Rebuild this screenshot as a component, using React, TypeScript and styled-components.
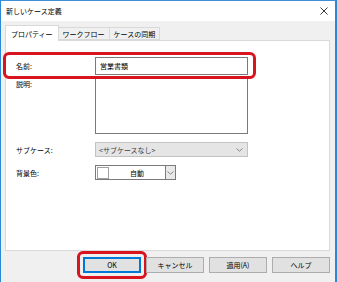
import { createGlobalStyle, styled } from 'styled-components';

const GlobalStyle = createGlobalStyle`
  html, body { margin: 0; padding: 0; background: #fff; }
  body { font-family: "Noto Sans CJK JP", "Noto Sans", sans-serif; font-size: 7px; color: #000; }
`;

const Window = styled.div`
  width: 337px;
  height: 282px;
  box-sizing: border-box;
  border-top: 1px solid #3c8fd8;
  border-left: 1px solid #2b88d8;
  border-right: 2px solid #2b88d8;
  background: #f0f0f0;
  display: flex;
  flex-direction: column;
  overflow: hidden;
`;

const TitleBar = styled.div`
  height: 20px;
  background: #fff;
  display: flex;
  align-items: center;
  justify-content: space-between;
  padding: 0 7px 0 5px;
`;

const Body = styled.div`
  flex: 1;
  display: flex;
  flex-direction: column;
  padding: 4px 5px 0 4px;
`;

const TabStrip = styled.div`
  display: flex;
  align-items: flex-end;
  height: 15px;
`;

const Tab = styled.div<{ active?: boolean }>`
  box-sizing: border-box;
  height: ${({ active }) => (active ? '16px' : '13px')};
  margin-bottom: ${({ active }) => (active ? '-1px' : '0')};
  padding: 0 ${({ active }) => (active ? '5px' : '4px')};
  display: flex;
  align-items: center;
  background: ${({ active }) => (active ? '#fff' : '#f0f0f0')};
  border: 1px solid #d9d9d9;
  border-bottom: ${({ active }) => (active ? 'none' : '1px solid #d9d9d9')};
  margin-left: ${({ active }) => (active ? '0' : '-1px')};
  position: relative;
  z-index: ${({ active }) => (active ? 1 : 0)};
  white-space: nowrap;
`;

const Panel = styled.div`
  box-sizing: border-box;
  height: 211px;
  background: #fff;
  border: 1px solid #d9d9d9;
  padding: 16px 0 0 10px;
  display: grid;
  grid-template-columns: 79px 153px;
  grid-auto-rows: min-content;
`;

const Label = styled.div<{ top?: boolean; gap?: number }>`
  display: flex;
  align-items: ${({ top }) => (top ? 'flex-start' : 'center')};
  padding-top: ${({ top }) => (top ? '4px' : '0')};
  margin-top: ${({ gap }) => gap ?? 0}px;
`;

const NameRow = styled.div`
  grid-column: 1 / 3;
  display: grid;
  grid-template-columns: 79px 153px;
  position: relative;
  &::after {
    content: '';
    position: absolute;
    left: -13px;
    top: -5px;
    width: 247px;
    height: 21px;
    border: 3.5px solid #d8141e;
    border-radius: 6px;
  }
`;

const TextInput = styled.div`
  box-sizing: border-box;
  height: 18px;
  border: 1px solid #7a7a7a;
  padding: 0 4px;
  display: flex;
  align-items: center;
`;

const TextArea = styled.div`
  box-sizing: border-box;
  height: 56px;
  margin-top: 3px;
  border: 1px solid #7a7a7a;
`;

const Select = styled.div`
  box-sizing: border-box;
  height: 15px;
  margin-top: 8px;
  border: 1px solid #c3c3c3;
  background: #e5e5e5;
  color: #3f3f3f;
  display: flex;
  align-items: center;
  justify-content: space-between;
  padding: 0 4px 0 3px;
`;

const Combo = styled.div`
  box-sizing: border-box;
  width: 81px;
  height: 15px;
  margin-top: 8px;
  border: 1px solid #7a7a7a;
  background: #fff;
  display: flex;
  align-items: center;
`;

const Swatch = styled.div`
  box-sizing: border-box;
  width: 12px;
  height: 12px;
  margin-left: 1px;
  border: 1px solid #a0a0a0;
  background: #fff;
`;

const ComboText = styled.div`
  flex: 1;
  text-align: center;
`;

const ComboButton = styled.div`
  box-sizing: border-box;
  width: 10px;
  height: 100%;
  border-left: 1px solid #7a7a7a;
  background: #e9e9e9;
  display: flex;
  align-items: center;
  justify-content: center;
`;

const ButtonRow = styled.div`
  display: flex;
  gap: 5px;
  padding: 6px 0 0 78px;
`;

const Button = styled.div<{ focused?: boolean }>`
  box-sizing: border-box;
  width: 58px;
  height: 16px;
  background: #e1e1e1;
  border: 1px solid ${({ focused }) => (focused ? '#0078d7' : '#adadad')};
  box-shadow: ${({ focused }) => (focused ? 'inset 0 0 0 1px #0078d7' : 'none')};
  display: flex;
  align-items: center;
  justify-content: center;
  position: relative;
  &::after {
    content: '';
    display: ${({ focused }) => (focused ? 'block' : 'none')};
    position: absolute;
    left: -7px;
    top: -7px;
    width: 64px;
    height: 22px;
    border: 3.5px solid #d8141e;
    border-radius: 6px;
  }
`;

const Chevron = () => (
  <svg width="7" height="4" viewBox="0 0 7 4">
    <path d="M0.5 0.5 L3.5 3.2 L6.5 0.5" fill="none" stroke="#7a7a7a" strokeWidth="0.9" />
  </svg>
);

const CloseIcon = () => (
  <svg width="8" height="8" viewBox="0 0 8 8">
    <path d="M0.5 0.5 L7.5 7.5 M7.5 0.5 L0.5 7.5" stroke="#222" strokeWidth="0.9" />
  </svg>
);

export default function App() {
  return (
    <>
      <GlobalStyle />
      <Window>
        <TitleBar>
          <span>新しいケース定義</span>
          <CloseIcon />
        </TitleBar>
        <Body>
          <TabStrip>
            <Tab active>プロパティー</Tab>
            <Tab>ワークフロー</Tab>
            <Tab>ケースの同期</Tab>
          </TabStrip>
          <Panel>
            <NameRow>
              <Label>名前:</Label>
              <TextInput>営業書類</TextInput>
            </NameRow>
            <Label top>説明:</Label>
            <TextArea />
            <Label gap={8}>サブケース:</Label>
            <Select>
              <span>&lt;サブケースなし&gt;</span>
              <Chevron />
            </Select>
            <Label gap={8}>背景色:</Label>
            <Combo>
              <Swatch />
              <ComboText>自動</ComboText>
              <ComboButton>
                <Chevron />
              </ComboButton>
            </Combo>
          </Panel>
          <ButtonRow>
            <Button focused>OK</Button>
            <Button>キャンセル</Button>
            <Button>適用(A)</Button>
            <Button>ヘルプ</Button>
          </ButtonRow>
        </Body>
      </Window>
    </>
  );
}
